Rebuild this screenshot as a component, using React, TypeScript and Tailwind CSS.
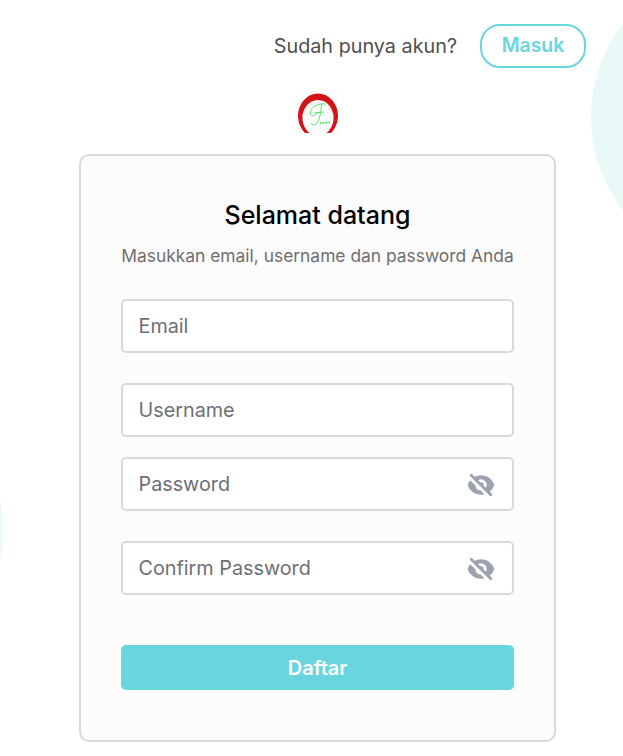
import { FC } from "react";
import { HiEyeOff } from "react-icons/hi";

const inputBox =
  "flex items-center h-[54px] rounded-[5px] border-2 border-[#d9d9d9] bg-white pl-[15.5px] pr-[17px] text-[19.8px] leading-[24px] text-[#6b7075]";

const Logo: FC = () => (
  <svg width="42" height="42" viewBox="0 0 42 42" className="block">
    <rect width="42" height="42" fill="#fbfefd" />
    <path d="M8 41 A20 22.5 0 1 1 34 41 L29.5 41 A15.5 18 0 1 0 12.5 41 Z" fill="#d2141a" />
    <path d="M6 24 A15.5 18 0 0 1 36 24" fill="none" stroke="#f7dcdc" strokeWidth="1.8" strokeDasharray="1.3 0.9" />
    <path d="M28 12 C21 11 14 15 13.5 20 C13 25 18 25 21 20 M24.5 12 C24 20 23 28 19 32 C17 33 15 33 14 31 M17 21 L27 20" fill="none" stroke="#4fdc5f" strokeWidth="0.9" />
    <path d="M23 31 L33 30.5" fill="none" stroke="#4fdc5f" strokeWidth="1.8" strokeDasharray="1 0.5" />
  </svg>
);

const Field: FC<{ label: string; eye?: boolean }> = ({ label, eye }) => (
  <div className={inputBox}>
    <span className="flex-1">{label}</span>
    {eye && <HiEyeOff className="relative top-[1px] text-[#9ca3af]" size={28} />}
  </div>
);

export default function App() {
  return (
    <div className="relative h-[756px] w-[623px] overflow-hidden bg-white font-['Inter',sans-serif]">
      {/* background circles */}
      <div className="absolute left-[591px] top-[-35px] h-[304px] w-[304px] rounded-full bg-[#e8f9f8]" />
      <div className="absolute left-[-297px] top-[380px] h-[300px] w-[300px] rounded-full bg-[#e8f9f8]" />

      <div className="relative flex flex-col">
        <div className="flex h-[92px] items-start justify-end gap-[23px] pr-[37px] pt-[24px]">
          <span className="mt-[8px] text-[19.8px] leading-[28px] text-[#4f4f4f]">Sudah punya akun?</span>
          <div className="flex h-[44px] w-[106px] items-center justify-center rounded-[20px] border-2 border-[#69d5df] text-[19.4px] font-semibold text-[#69d5df]">
            Masuk
          </div>
        </div>

        <div className="flex h-[62px] justify-center pl-[12px]">
          <Logo />
        </div>

        <div className="ml-[79px] flex h-[588px] w-[477px] flex-col rounded-[10px] border-2 border-[#d9d9d9] bg-[#fcfcfd] px-[40px]">
          <h1 className="mt-[43px] text-center text-[25px] leading-[32px] font-medium text-black">Selamat datang</h1>
          <p className="mt-[11px] text-center text-[17.4px] leading-[28px] whitespace-nowrap text-[#6f6f6f]">
            Masukkan email, username dan password Anda
          </p>
          <div className="mt-[29px] flex flex-col">
            <Field label="Email" />
            <div className="mt-[30px]">
              <Field label="Username" />
            </div>
            <div className="mt-[20px]">
              <Field label="Password" eye />
            </div>
            <div className="mt-[30px]">
              <Field label="Confirm Password" eye />
            </div>
          </div>
          <button className="mt-[50px] h-[45px] rounded-[5px] bg-[#69d5df] text-[20px] font-semibold text-white">
            Daftar
          </button>
        </div>
      </div>
    </div>
  );
}
